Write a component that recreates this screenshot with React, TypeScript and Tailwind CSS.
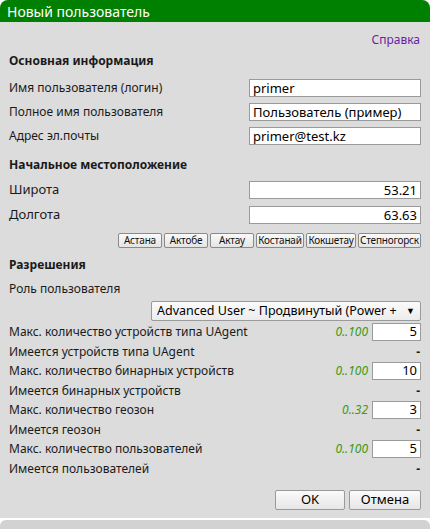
import React from "react";

const font = { fontFamily: '"Noto Sans", "Open Sans", sans-serif' };

function TextInput({ value, right }: { value: string; right?: boolean }) {
  return (
    <div
      className={`w-[172px] h-[18px] bg-white border border-[#9a9a9a] text-[13px] leading-[16px] text-black px-[3px] flex items-center ${right ? "justify-end" : "justify-start"}`}
    >
      {value}
    </div>
  );
}

function MaxRow({ label, range, value }: { label: string; range: string; value: string }) {
  return (
    <div className="h-[20px] flex items-center justify-between">
      <span>{label}</span>
      <div className="flex items-center gap-[4px]">
        <span className="italic text-[#3a9a16] text-[12px]">{range}</span>
        <div className="w-[49px] h-[18px] bg-white border border-[#9a9a9a] text-[13px] flex items-center justify-end px-[3px] text-black">
          {value}
        </div>
      </div>
    </div>
  );
}

function HaveRow({ label }: { label: string }) {
  return (
    <div className="h-[19px] flex items-center justify-between">
      <span>{label}</span>
      <span className="font-bold pr-[1px]">-</span>
    </div>
  );
}

function CityBtn({ name, w }: { name: string; w: string }) {
  return (
    <div
      className={`${w} h-[15px] border border-[#8a8a8a] rounded-[2px] bg-gradient-to-b from-[#fafafa] to-[#e4e4e4] text-[10px] leading-[13px] flex items-center justify-center text-[#111] whitespace-nowrap overflow-hidden tracking-[-0.2px]`}
    >
      {name}
    </div>
  );
}

export default function App() {
  return (
    <div className="w-[430px] h-[529px] bg-white relative overflow-hidden" style={font}>
      <div className="w-[430px] h-[518px] bg-[#dcdcdc] flex flex-col rounded-t-[8px] overflow-hidden">
        <div className="h-[22px] bg-[#008000] text-white text-[14px] pl-[7px] flex items-center">
          Новый пользователь
        </div>
        <div className="flex flex-col px-[9px] text-[12px] text-[#1a1a1a]">
          <div className="h-[30px] flex items-center justify-end pt-[6px] pr-[1px]">
            <span className="text-[#6a1fa0]">Справка</span>
          </div>
          <div className="h-[18px] flex items-center font-bold">Основная информация</div>
          <div className="h-[6px]" />
          <div className="h-[24px] flex items-center justify-between">
            <span>Имя пользователя (логин)</span>
            <TextInput value="primer" />
          </div>
          <div className="h-[24px] flex items-center justify-between">
            <span>Полное имя пользователя</span>
            <TextInput value="Пользователь (пример)" />
          </div>
          <div className="h-[24px] flex items-center justify-between">
            <span>Адрес эл.почты</span>
            <TextInput value="primer@test.kz" />
          </div>
          <div className="h-[8px]" />
          <div className="h-[18px] flex items-center font-bold">Начальное местоположение</div>
          <div className="h-[3px]" />
          <div className="h-[25px] flex items-center justify-between text-[13px]">
            <span>Широта</span>
            <TextInput value="53.21" right />
          </div>
          <div className="h-[25px] flex items-center justify-between text-[13px]">
            <span>Долгота</span>
            <TextInput value="63.63" right />
          </div>
          <div className="h-[6px]" />
          <div className="flex justify-end gap-[2px]">
            <CityBtn name="Астана" w="w-[44px]" />
            <CityBtn name="Актобе" w="w-[44px]" />
            <CityBtn name="Актау" w="w-[44px]" />
            <CityBtn name="Костанай" w="w-[48px]" />
            <CityBtn name="Кокшетау" w="w-[50px]" />
            <CityBtn name="Степногорск" w="w-[63px]" />
          </div>
          <div className="h-[8px]" />
          <div className="h-[18px] flex items-center font-bold">Разрешения</div>
          <div className="h-[6px]" />
          <div className="h-[18px] flex items-center">Роль пользователя</div>
          <div className="h-[3px]" />
          <div className="flex justify-end">
            <div className="w-[270px] h-[20px] border border-[#9a9a9a] rounded-[2px] bg-gradient-to-b from-[#fbfbfb] to-[#ececec] flex items-center justify-between pl-[5px] pr-[5px] text-[12.5px] text-black">
              <span className="whitespace-nowrap overflow-hidden">Advanced User ~ Продвинутый (Power +</span>
              <span className="text-[9px]">▼</span>
            </div>
          </div>
          <div className="h-[1px]" />
          <MaxRow label="Макс. количество устройств типа UAgent" range="0..100" value="5" />
          <HaveRow label="Имеется устройств типа UAgent" />
          <MaxRow label="Макс. количество бинарных устройств" range="0..100" value="10" />
          <HaveRow label="Имеется бинарных устройств" />
          <MaxRow label="Макс. количество геозон" range="0..32" value="3" />
          <HaveRow label="Имеется геозон" />
          <MaxRow label="Макс. количество пользователей" range="0..100" value="5" />
          <HaveRow label="Имеется пользователей" />
          <div className="h-[12px]" />
          <div className="flex justify-end gap-[4px]">
            <div className="w-[70px] h-[20px] border border-[#9a9a9a] rounded-[2px] bg-gradient-to-b from-[#fbfbfb] to-[#e6e6e6] flex items-center justify-center text-[13px] text-black">
              OK
            </div>
            <div className="w-[72px] h-[20px] border border-[#9a9a9a] rounded-[2px] bg-gradient-to-b from-[#fbfbfb] to-[#e6e6e6] flex items-center justify-center text-[13px] text-black">
              Отмена
            </div>
          </div>
        </div>
      </div>
      <div className="mt-[2px] w-[430px] h-[9px] bg-[#d2d2d2] rounded-t-[6px]" />
    </div>
  );
}
